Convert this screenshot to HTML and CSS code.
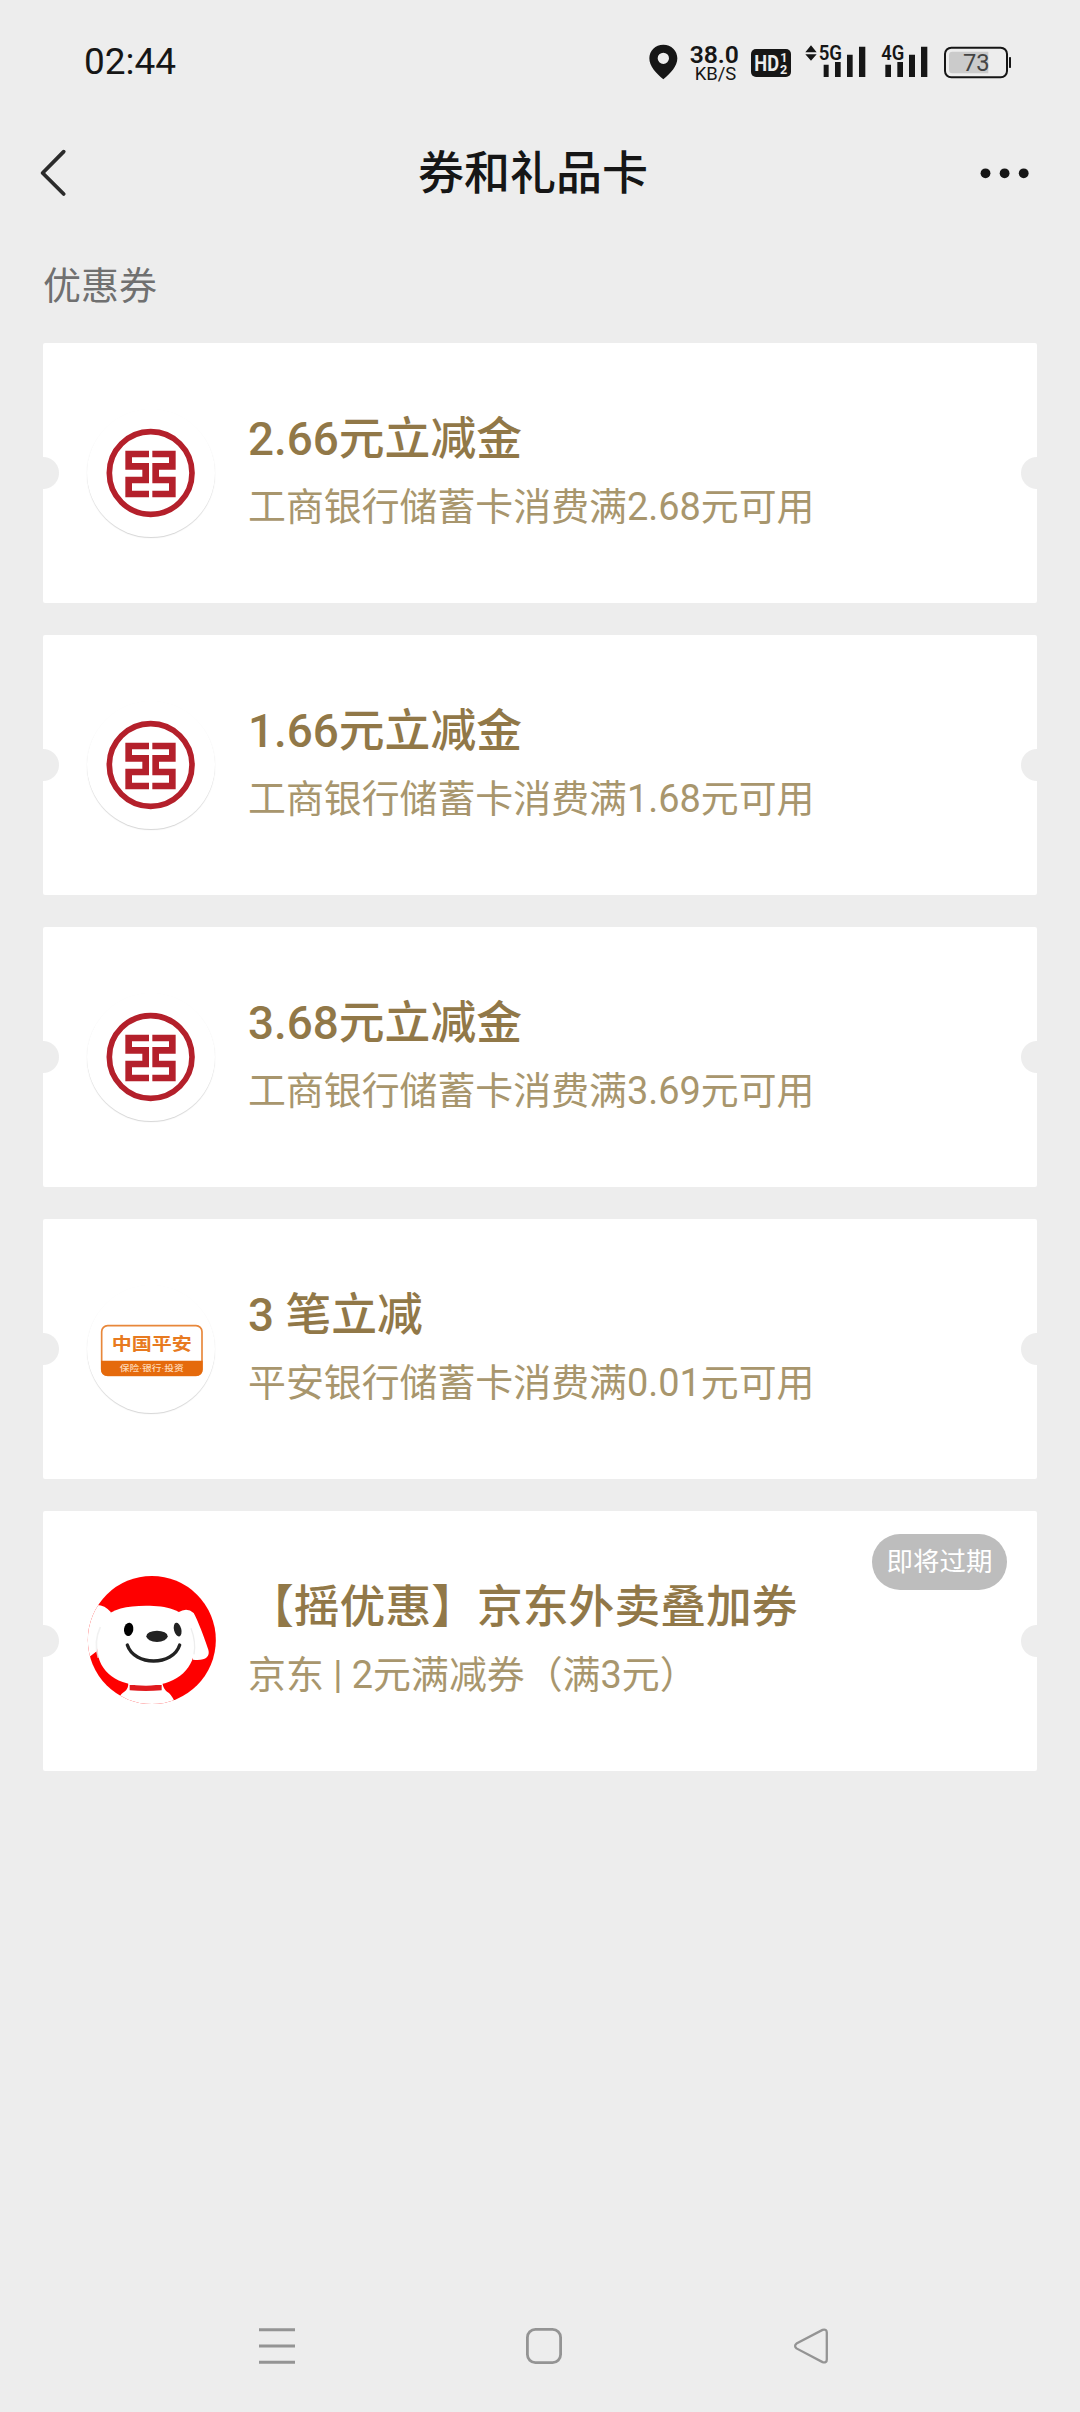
FILE: index.html
```html
<!DOCTYPE html>
<html lang="zh-CN">
<head>
<meta charset="utf-8">
<title>券和礼品卡</title>
<link rel="stylesheet" href="styles.css">
</head>
<body>
<svg class="defs" width="0" height="0" aria-hidden="true">
  <symbol id="icbc" viewBox="22 -3 384 384">
    <circle cx="213" cy="189" r="124" fill="none" stroke="#b4202b" stroke-width="17"/>
    <path d="M208 132H147V169H198V210H147V252H208M218 132H278V169H228V210H278V252H218" fill="none" stroke="#b4202b" stroke-width="20"/>
  </symbol>
</svg>
<div class="screen">
  <header class="status">
    <span class="time">02:44</span>
    <div class="status-icons">
      <svg width="40" height="70" viewBox="50 0 120 210"><path fill="#161616" fill-rule="evenodd" d="M99 44C75 44 57 62 57 85C57 109 77 130 99 148C121 130 141 109 141 85C141 62 123 44 99 44ZM99 68A17 17 0 1 1 99 102A17 17 0 1 1 99 68Z"/></svg>
      <svg width="58.33" height="70" viewBox="170 0 175 210"><text class="st b" x="178" y="98" font-size="69" textLength="148" lengthAdjust="spacingAndGlyphs">38.0</text><text class="st" x="193" y="150" font-size="53" textLength="125" lengthAdjust="spacingAndGlyphs">KB/S</text></svg>
      <svg width="51.67" height="70" viewBox="345 0 155 210"><rect x="363" y="57" width="120" height="84" rx="15" fill="#161616"/><g class="inv"><text x="373" y="123" font-size="64" textLength="74" lengthAdjust="spacingAndGlyphs">HD</text><text x="451" y="95" font-size="38">1</text><text x="450" y="131" font-size="38">2</text></g></svg>
      <svg width="76.67" height="70" viewBox="500 0 230 210"><path fill="#161616" d="M525 67L542 46L559 67ZM525 73L542 92L559 73ZM580 104h15v37h-15zM614 96h17v45h-17zM650 74h17v67h-17zM686 50h19v91h-19z"/><text class="st b" x="565" y="90" font-size="60" textLength="70" lengthAdjust="spacingAndGlyphs">5G</text></svg>
      <svg width="63.33" height="70" viewBox="730 0 190 210"><path fill="#161616" d="M767 104h17v37h-17zM803 96h17v45h-17zM838 74h18v67h-18zM874 50h19v91h-19z"/><text class="st b" x="755" y="90" font-size="60" textLength="69" lengthAdjust="spacingAndGlyphs">4G</text></svg>
      <svg width="80" height="70" viewBox="920 0 240 210"><rect x="944" y="53" width="186" height="89" rx="19" fill="none" stroke="#161616" stroke-width="6"/><path fill="#cbcbcb" d="M966 65H1074V130H966Q956 130 956 120V75Q956 65 966 65Z"/><rect x="1136" y="81" width="6" height="33" rx="2" fill="#161616"/><text x="998" y="122" class="st" style="fill:#444" font-size="70" textLength="80" lengthAdjust="spacingAndGlyphs">73</text></svg>
    </div>
  </header>
  <nav class="topbar">
    <svg width="36" height="56" viewBox="36 144 36 56"><path d="M63.7 150.7L42.6 172L63.7 193" fill="none" stroke="#2b2b2b" stroke-width="3.8" stroke-linecap="round" stroke-linejoin="round"/></svg>
    <h1>券和礼品卡</h1>
    <svg width="52" height="20" viewBox="978 162 52 20" fill="#161616"><circle cx="985.5" cy="172.3" r="4.9"/><circle cx="1004.6" cy="172.3" r="4.9"/><circle cx="1023.7" cy="172.3" r="4.9"/></svg>
  </nav>
  <main>
    <h2>优惠券</h2>
    <section class="coupons">
      <article class="card">
        <svg class="avatar"><use href="#icbc"/></svg>
        <div class="info"><h3>2.66元立减金</h3><p>工商银行储蓄卡消费满2.68元可用</p></div>
      </article>
      <article class="card">
        <svg class="avatar"><use href="#icbc"/></svg>
        <div class="info"><h3>1.66元立减金</h3><p>工商银行储蓄卡消费满1.68元可用</p></div>
      </article>
      <article class="card">
        <svg class="avatar"><use href="#icbc"/></svg>
        <div class="info"><h3>3.68元立减金</h3><p>工商银行储蓄卡消费满3.69元可用</p></div>
      </article>
      <article class="card">
        <svg class="avatar" viewBox="22 15 384 384">
          <rect x="66" y="137" width="301" height="149" rx="18" fill="#fff" stroke="#e8873a" stroke-width="5"/>
          <path d="M64 242H369V268Q369 288 349 288H84Q64 288 64 268Z" fill="#e56a0c"/>
          <text x="96" y="211" font-size="52" font-weight="700" fill="#e87a20" textLength="240" lengthAdjust="spacingAndGlyphs">中国平安</text>
          <text x="120" y="274" font-size="24" font-weight="500" fill="#ffd9b8" textLength="192" lengthAdjust="spacingAndGlyphs">保险·银行·投资</text>
        </svg>
        <div class="info"><h3>3 笔立减</h3><p>平安银行储蓄卡消费满0.01元可用</p></div>
      </article>
      <article class="card">
        <svg class="avatar plain" viewBox="22 36 384 384">
          <defs>
            <clipPath id="disc"><circle cx="216.500" cy="225" r="192"/></clipPath>
            <linearGradient id="ear"><stop offset="0" stop-color="#fff"/><stop offset=".55" stop-color="#fff"/><stop offset="1" stop-color="#ececec"/></linearGradient>
          </defs>
          <g clip-path="url(#disc)">
            <rect x="20" y="30" width="392" height="392" fill="#fe0000"/>
            <path d="M10 120H48Q74 118 94 142L70 180L52 258L24 280L10 290Z" fill="#fff"/>
            <path d="M296 142Q322 126 342 144C352 160 376 222 386 254C392 276 376 288 340 284L330 200Z" fill="#fff"/>
            <path d="M146 354Q146 374 134 380Q126 384 116 400V430H284V408Q274 386 262 380Q252 374 248 354Z" fill="#fff"/>
            <path d="M150 360H246V376Q198 380 150 376Z" fill="#e01a1e"/>
            <path d="M199 122C262 122 310 134 328 174C338 200 346 226 346 248C340 320 282 362 199 362C116 362 56 324 52 248C54 212 60 182 76 158C96 132 140 122 199 122Z" fill="#fff"/>
            <path d="M62 186C50 212 46 246 56 278" fill="none" stroke="#ededed" stroke-width="5" opacity=".8"/>
            <path d="M334 190C344 216 348 240 343 268" fill="none" stroke="#ededed" stroke-width="4"/>
          </g>
          <ellipse cx="147" cy="193" rx="14" ry="20" transform="rotate(8 147 193)"/>
          <ellipse cx="294" cy="194" rx="11" ry="21" fill="#222" transform="rotate(-14 294 194)"/>
          <ellipse cx="232" cy="214" rx="32" ry="17" fill="#222"/>
          <path d="M143 240C164 304 280 304 300 240" fill="none" stroke="#222" stroke-width="10" stroke-linecap="round"/>
        </svg>
        <div class="info"><h3>【摇优惠】京东外卖叠加券</h3><p>京东 | 2元满减券（满3元）</p></div>
        <span class="tag">即将过期</span>
      </article>
    </section>
  </main>
  <footer class="navbar">
    <svg width="36" height="36" viewBox="0 0 36 36"><path d="M0 1.700H36M0 18H36M0 34.300H36" stroke-width="3"/></svg>
    <svg width="36" height="36" viewBox="0 0 36 36"><rect x="1.400" y="1.400" width="33.200" height="33.200" rx="8"/></svg>
    <svg width="36" height="36" viewBox="0 0 36 36"><path d="M3.500 15.600L29.500 1.900Q33.800.7 33.800 4.600V31.400Q33.800 35.300 29.500 34.100L3.500 20.400Q.7 18 3.500 15.600Z" stroke-width="2.300"/></svg>
  </footer>
</div>
</body>
</html>
```

FILE: styles.css
```css
* { box-sizing: border-box; margin: 0; padding: 0; }
body {
  background: #ededed;
  font-family: Roboto, "Noto Sans CJK SC", sans-serif;
}
svg { display: block; flex: none; }
.defs { position: absolute; }
.screen {
  height: 2412px;
  display: flex;
  flex-direction: column;
}
.status {
  height: 130px;
  padding: 30px 63.3px 0 84px;
  display: flex;
  justify-content: space-between;
  align-items: flex-start;
}
.time { font-size: 37px; line-height: 64px; color: #161616; }
.status-icons { display: flex; }
.st { fill: #161616; }
.b { font-weight: 600; }
.inv { fill: #ededed; font-weight: 700; }
.topbar {
  height: 86px;
  padding: 0 50px 0 36px;
  display: flex;
  align-items: center;
  justify-content: space-between;
}
.topbar h1 {
  font-size: 46px;
  line-height: 68px;
  font-weight: 500;
  color: #161616;
  padding-left: 16px;
}
main { flex: 1; padding: 0 43px; }
main h2 {
  height: 127px;
  padding-top: 42px;
  font-size: 38px;
  line-height: 56px;
  font-weight: 400;
  color: #707070;
}
.coupons { display: flex; flex-direction: column; gap: 32px; }
.card {
  position: relative;
  height: 260px;
  padding-left: 44px;
  display: flex;
  align-items: center;
  gap: 33px;
  border-radius: 2px;
  background:
    radial-gradient(circle at 0 50%, #ededed 15.500px, transparent 16.500px),
    radial-gradient(circle at 100% 50%, #ededed 15.500px, transparent 16.500px),
    #fff;
}
.avatar {
  width: 128px;
  height: 128px;
  border-radius: 50%;
  box-shadow: 0 1px 1px rgba(0, 0, 0, .17);
}
.plain { box-shadow: none; overflow: visible; }
.info { white-space: nowrap; }
.info h3 {
  font-size: 45.800px;
  line-height: 68px;
  font-weight: 500;
  color: #917848;
}
.info p {
  font-size: 37.900px;
  line-height: 66px;
  color: #a8966d;
}
.tag {
  position: absolute;
  top: 23px;
  right: 30px;
  width: 135px;
  height: 56px;
  border-radius: 28px;
  background: #bdbdbd;
  color: #fff;
  font-size: 26.500px;
  line-height: 56px;
  text-align: center;
}
.navbar {
  height: 84px;
  padding: 0 251px 0 259px;
  display: flex;
  justify-content: space-between;
  fill: none;
  stroke: #949494;
  stroke-width: 2.800;
}
```
